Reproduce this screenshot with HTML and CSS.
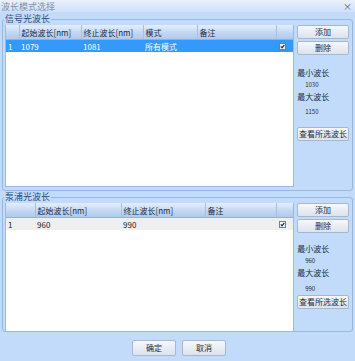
FILE: index.html
```html
<!DOCTYPE html>
<html lang="zh-CN">
<head>
    <meta charset="UTF-8">
    <title>波长模式选择</title>
    <link rel="stylesheet" href="styles.css">
</head>
<body>
    <div class="dialog">
        <div class="titlebar">
            <span class="title">波长模式选择</span>
            <span class="close">×</span>
        </div>

        <fieldset class="group group-signal">
            <legend>信号光波长</legend>
            <div class="group-body">
                <div class="grid">
                    <table>
                        <colgroup>
                            <col style="width:13px"><col style="width:62px"><col style="width:62px">
                            <col style="width:54px"><col style="width:79px"><col>
                        </colgroup>
                        <tr class="head">
                            <th></th><th>起始波长[nm]</th><th>终止波长[nm]</th><th>模式</th><th>备注</th><th></th>
                        </tr>
                        <tr class="row selected">
                            <td>1</td><td>1079</td><td>1081</td><td>所有模式</td><td></td>
                            <td><svg class="check" width="7" height="7" viewBox="0 0 7 7"><rect x="0.5" y="0.5" width="6" height="6" fill="#f2f5fa" stroke="#6f7f96"/><path d="M1.8 3.4 L3 4.8 L5.3 2" fill="none" stroke="#1b2a44" stroke-width="1.2"/></svg></td>
                        </tr>
                    </table>
                </div>
                <div class="side">
                    <button class="btn">添加</button>
                    <button class="btn">删除</button>
                    <div class="lbl min">最小波长</div>
                    <div class="val">1030</div>
                    <div class="lbl">最大波长</div>
                    <div class="val max">1150</div>
                    <button class="btn view">查看所选波长</button>
                </div>
            </div>
        </fieldset>

        <fieldset class="group group-pump">
            <legend>泵浦光波长</legend>
            <div class="group-body">
                <div class="grid">
                    <table>
                        <colgroup>
                            <col style="width:29px"><col style="width:86px"><col style="width:84px">
                            <col style="width:71px"><col>
                        </colgroup>
                        <tr class="head">
                            <th></th><th>起始波长[nm]</th><th>终止波长[nm]</th><th>备注</th><th></th>
                        </tr>
                        <tr class="row alt">
                            <td>1</td><td>960</td><td>990</td><td></td>
                            <td><svg class="check" width="7" height="7" viewBox="0 0 7 7"><rect x="0.5" y="0.5" width="6" height="6" fill="#f2f5fa" stroke="#6f7f96"/><path d="M1.8 3.4 L3 4.8 L5.3 2" fill="none" stroke="#1b2a44" stroke-width="1.2"/></svg></td>
                        </tr>
                    </table>
                </div>
                <div class="side">
                    <button class="btn">添加</button>
                    <button class="btn">删除</button>
                    <div class="lbl min">最小波长</div>
                    <div class="val">960</div>
                    <div class="lbl">最大波长</div>
                    <div class="val max">990</div>
                    <button class="btn view">查看所选波长</button>
                </div>
            </div>
        </fieldset>

        <div class="footer">
            <button class="btn wide">确定</button>
            <button class="btn wide">取消</button>
        </div>
    </div>
</body>
</html>
```

FILE: styles.css
```css
body { margin: 0; background: #c3dbfa; font-family: "Noto Sans CJK SC", "DejaVu Sans", sans-serif; font-size: 8px; color: #1e2a3c; }
.dialog { width: 355px; height: 361px; display: flex; flex-direction: column; }
.titlebar { height: 12px; display: flex; justify-content: space-between; align-items: center; padding: 0 3px 0 1px; background: linear-gradient(#e9f1fc, #cfe1f8); }
.title { color: #7d92ae; font-size: 9px; line-height: 11px; }
.close { color: #4a5a70; font-size: 9px; line-height: 11px; }
.group { margin: 0 2px; padding: 0 3px 3px 2px; border: 1px solid #98b6de; border-radius: 3px; min-width: 0; }
.group legend { padding: 0 1px; margin-left: -1px; font-size: 9px; color: #2a4a78; line-height: 10px; }
.group-signal { margin-top: 2px; height: 172px; }
.group-pump { margin-top: 1px; height: 135px; }
.group-body { display: flex; height: 100%; }
.grid { width: 290px; background: #fff; border: 1px solid #9cb9e0; border-top: none; box-sizing: border-box; margin-top: 1px; }
.group-signal .grid { height: 162px; }
.group-pump .grid { height: 129px; }
table { width: 100%; border-collapse: collapse; table-layout: fixed; }
th, td { padding: 0 0 0 2px; text-align: left; white-space: nowrap; overflow: hidden; font-weight: normal; }
.head th { height: 14px; background: linear-gradient(#e4eefb, #c0d5f2 60%, #b1c9ec); border-right: 1px solid #a6bfe2; border-bottom: 1px solid #93b1da; color: #1c2b45; }
.head th:last-child { border-right: none; }
.row td { height: 12px; }
.selected td { background: #3399fd; color: #fff; }
.alt td { background: #efefef; color: #222; }
.check { display: block; margin-left: 1px; }
.side { width: 52px; margin-left: 3px; display: flex; flex-direction: column; padding-top: 1px; }
.btn { height: 14px; padding: 0; margin: 0 0 2px 0; border: 1px solid #a8b7cb; border-radius: 2px; background: linear-gradient(#f6f8fb, #dbe3ee); font-family: inherit; font-size: 8px; color: #1e2a3c; line-height: 12px; }
.lbl { font-size: 8px; line-height: 12px; }
.val { font-size: 6px; padding-left: 8px; line-height: 12px; }
.group-signal .min { margin-top: 10px; }
.group-signal .max { margin-top: 3px; }
.group-signal .view { margin-top: 9px; }
.group-pump .min { margin-top: 8px; }
.group-pump .max { margin-top: 4px; }
.group-pump .view { margin-top: 0; }
.footer { display: flex; justify-content: center; gap: 6px; margin-top: 8px; padding-left: 3px; }
.wide { width: 44px; height: 16px; }
```
